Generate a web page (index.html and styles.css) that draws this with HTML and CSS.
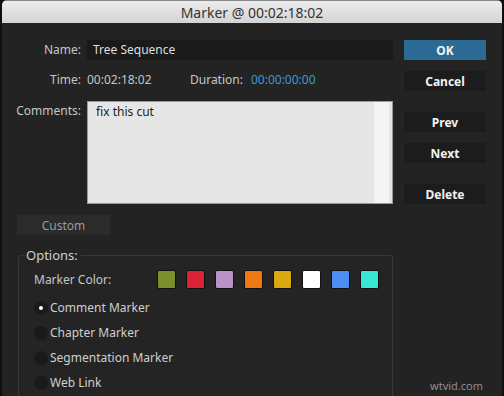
FILE: index.html
```html
<!DOCTYPE html>
<html lang="en">
<head>
    <meta charset="UTF-8">
    <title>Marker</title>
    <link rel="stylesheet" href="styles.css">
</head>
<body>
    <div class="window">
        <div class="titlebar">Marker @ 00:02:18:02</div>
        <div class="content">
            <div class="main">
                <div class="row name-row">
                    <span class="label">Name:</span>
                    <div class="field">Tree Sequence</div>
                </div>
                <div class="row time-row">
                    <span class="label">Time:</span>
                    <span class="time-value">00:02:18:02</span>
                    <span class="dur-label">Duration:</span>
                    <span class="dur-value">00:00:00:00</span>
                </div>
                <div class="row comments-row">
                    <span class="label">Comments:</span>
                    <div class="comments">
                        <div class="comments-text">fix this cut</div>
                        <div class="scroll-track"></div>
                    </div>
                </div>
                <button class="custom">Custom</button>
                <fieldset class="options">
                    <legend>Options:</legend>
                    <div class="color-row">
                        <span class="color-label">Marker Color:</span>
                        <div class="swatches">
                            <span class="swatch olive"></span>
                            <span class="swatch red"></span>
                            <span class="swatch lilac"></span>
                            <span class="swatch orange"></span>
                            <span class="swatch gold"></span>
                            <span class="swatch white"></span>
                            <span class="swatch blue"></span>
                            <span class="swatch teal"></span>
                        </div>
                    </div>
                    <div class="radio-row"><span class="radio checked"></span>Comment Marker</div>
                    <div class="radio-row"><span class="radio"></span>Chapter Marker</div>
                    <div class="radio-row"><span class="radio"></span>Segmentation Marker</div>
                    <div class="radio-row"><span class="radio"></span>Web Link</div>
                </fieldset>
            </div>
            <div class="side">
                <button class="btn primary">OK</button>
                <button class="btn cancel">Cancel</button>
                <button class="btn prev">Prev</button>
                <button class="btn next">Next</button>
                <button class="btn delete">Delete</button>
            </div>
        </div>
        <div class="watermark">wtvid.com</div>
    </div>
</body>
</html>
```
FILE: styles.css
```css
html, body {
    margin: 0;
    padding: 0;
    background: #0e0e0e;
    overflow: hidden;
}
body {
    font-family: "Noto Sans", "DejaVu Sans", sans-serif;
    font-size: 12px;
    color: #c6c6c6;
}
.window {
    position: relative;
    width: 500px;
    height: 396px;
    margin: 0 2px;
    background: #232323;
    border-radius: 5px 5px 0 0;
    overflow: hidden;
}
.titlebar {
    height: 22px;
    line-height: 23px;
    text-align: center;
    font-size: 14px;
    color: #333;
    background: linear-gradient(#ececec, #d4d4d4);
    border-top: 1px solid #8a8a8a;
    box-sizing: content-box;
}
.content {
    display: flex;
    padding-top: 17px;
}
.main {
    width: 391px;
}
.row {
    display: flex;
}
.label {
    width: 79px;
    margin-right: 6px;
    text-align: right;
    line-height: 20px;
}
.name-row {
    height: 20px;
}
.field {
    width: 300px;
    padding-left: 6px;
    height: 20px;
    line-height: 20px;
    background: #1a1a1a;
    color: #dedede;
}
.time-row {
    margin-top: 10px;
    height: 20px;
    line-height: 20px;
}
.time-value {
    width: 103px;
}
.dur-label {
    margin-right: 8px;
}
.dur-value {
    color: #3d9ad6;
}
.comments-row {
    margin-top: 11px;
}
.comments {
    display: flex;
    width: 304px;
    height: 101px;
    background: #e6e6e6;
    border: 1px solid #9a9a9a;
}
.comments-text {
    flex: 1;
    padding: 1px 0 0 8px;
    line-height: 18px;
    color: #1e1e1e;
}
.scroll-track {
    width: 14px;
    margin-right: 3px;
    background: #f5f5f5;
    border-left: 1px solid #ececec;
}
.custom {
    display: block;
    margin: 11px 0 0 15px;
    width: 93px;
    height: 20px;
    padding: 0;
    border: none;
    background: #2b2b2b;
    color: #9a9a9a;
    font-family: inherit;
    font-size: 12px;
}
.options {
    margin: 12px 0 0 16px;
    width: 375px;
    height: 200px;
    padding: 7px 0 0 15px;
    box-sizing: border-box;
    border: 1px solid #393939;
    border-radius: 3px;
    background: #242424;
}
.options legend {
    padding: 0 3px;
    margin-left: -11px;
    line-height: 16px;
    font-size: 13px;
    color: #cfcfcf;
}
.color-row {
    display: flex;
    height: 19px;
    line-height: 19px;
}
.color-label {
    width: 123px;
}
.swatches {
    display: flex;
    gap: 10px;
}
.swatch {
    width: 17px;
    height: 17px;
    border: 1px solid #111;
    border-radius: 2px;
}
.olive { background: #7b8f2f; }
.red { background: #da2336; }
.lilac { background: #b993c3; }
.orange { background: #ee7912; }
.gold { background: #d9aa10; }
.white { background: #ffffff; }
.blue { background: #4b8ff2; }
.teal { background: #38e8d2; }
.color-row + .radio-row {
    margin-top: 6px;
}
.radio-row {
    display: flex;
    align-items: center;
    height: 25px;
    color: #cfcfcf;
}
.radio {
    width: 14px;
    height: 14px;
    margin-right: 2px;
    border-radius: 50%;
    background: #1a1a1a;
    display: flex;
    align-items: center;
    justify-content: center;
}
.radio.checked::after {
    content: "";
    width: 4px;
    height: 4px;
    border-radius: 50%;
    background: #fff;
}
.side {
    display: flex;
    flex-direction: column;
    margin-left: 11px;
    width: 82px;
}
.btn {
    height: 20px;
    padding: 0;
    border: none;
    background: #1c1c1c;
    color: #f2f2f2;
    font-family: inherit;
    font-size: 12px;
    font-weight: bold;
}
.btn.primary {
    background: #2a6a93;
}
.cancel { margin-top: 11px; }
.prev { margin-top: 21px; }
.next { margin-top: 11px; }
.delete { margin-top: 21px; }
.watermark {
    position: absolute;
    right: 19px;
    bottom: 3px;
    font-size: 11px;
    color: #8e8e8e;
}
```
